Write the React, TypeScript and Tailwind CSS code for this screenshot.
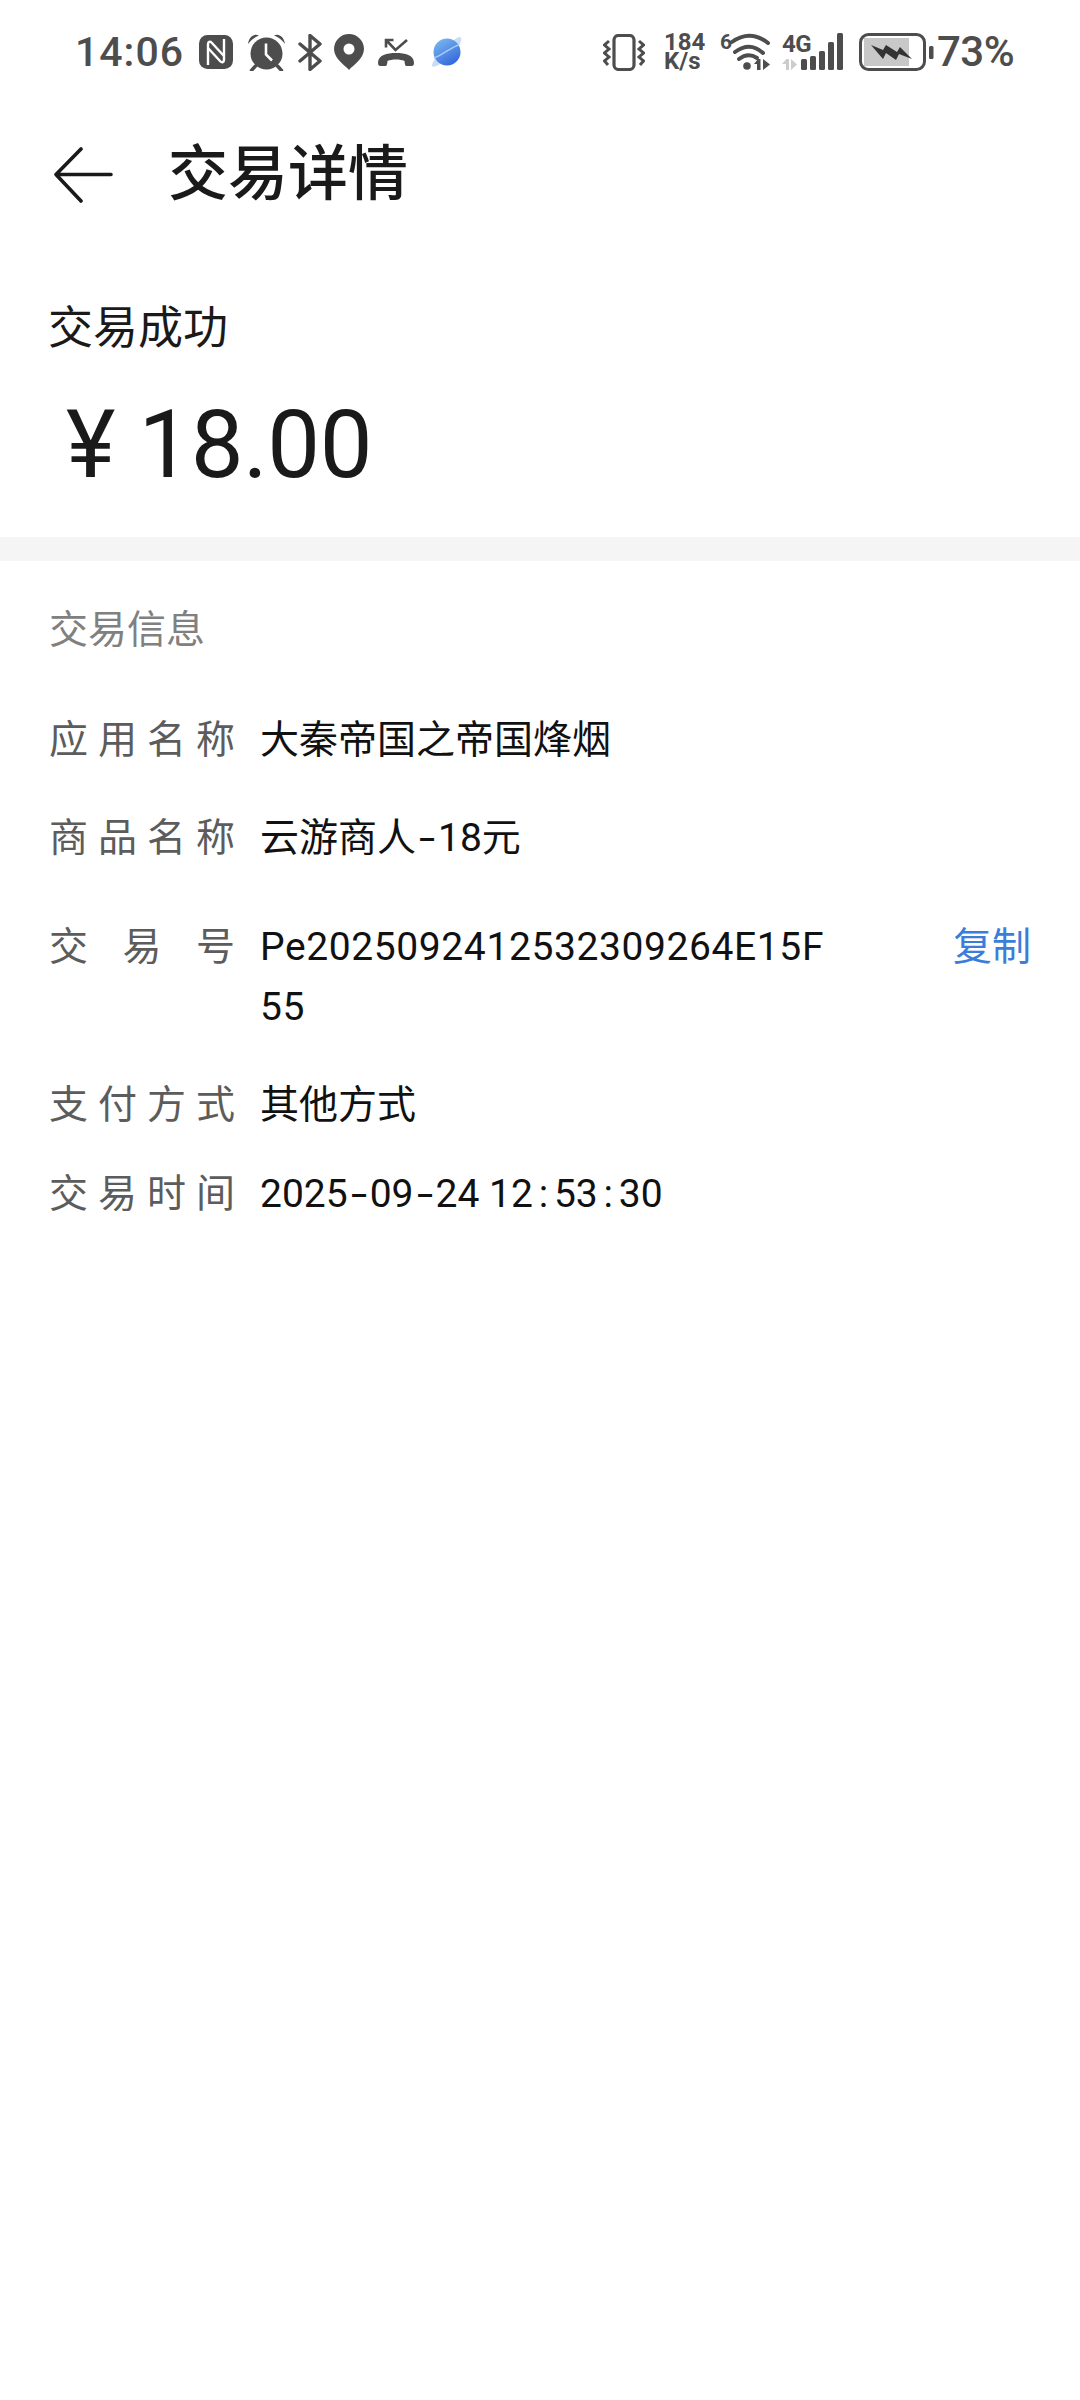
import React from 'react';

const FONT = "font-['Roboto','Noto_Sans_CJK_SC',sans-serif]";

const Nfc = () => (
  <svg width="34" height="34" viewBox="0 0 34 34" className="shrink-0">
    <rect width="34" height="34" rx="8.500" fill="#4d4d4d" />
    <path d="M9 30V9c0-2 2-3 3.500-1.500L25 21M25 4v21c0 2-2 3-3.500 1.500L9 13" fill="none" stroke="#fff" strokeWidth="2.400" strokeLinejoin="round" />
  </svg>
);

const Alarm = () => (
  <svg width="37" height="37" viewBox="0 0 37 37" className="shrink-0">
    <circle cx="18.500" cy="19.500" r="16" fill="#4d4d4d" />
    <path d="M18 9.500v11l6 6" fill="none" stroke="#fff" strokeWidth="2.600" />
    <path d="M0 10C1 3 6-1 11 1.500 6 3.500 3 6 0 10ZM37 10C36 3 31-1 26 1.500 31 3.500 34 6 37 10Z" fill="#4d4d4d" />
    <path d="M7.500 32l-4 4.500M29.500 32l4 4.500" stroke="#4d4d4d" strokeWidth="3.400" strokeLinecap="round" />
  </svg>
);

const Bluetooth = () => (
  <svg width="25" height="37" viewBox="0 0 25 37" className="shrink-0">
    <path d="M2 10l20 17-10 8.500V1.500L22 10 2 27" fill="none" stroke="#4d4d4d" strokeWidth="3.400" strokeLinejoin="round" strokeLinecap="round" />
  </svg>
);

const Pin = () => (
  <svg width="30" height="36" viewBox="0 0 30 36" className="shrink-0">
    <path d="M15 36C12 32 0 25 0 15a15 15 0 0 1 30 0c0 10-12 17-15 21Z" fill="#4d4d4d" />
    <circle cx="15" cy="15" r="5.500" fill="#fff" />
  </svg>
);

const MissedCall = () => (
  <svg width="36" height="29" viewBox="0 0 36 29" className="shrink-0">
    <path d="M8 9.500V2h7.500M8.500 2.500l9 9.500L29 2" fill="none" stroke="#4d4d4d" strokeWidth="2.600" />
    <path d="M0 25c0-8 9-10 18-10s18 2 18 10c0 2-1 3-2 3h-5c-2 0-2-1-2.500-5-4-2-13-2-17 0C9 27 9 28 7 28H2c-1 0-2-1-2-3Z" fill="#4d4d4d" />
  </svg>
);

const Planet = () => (
  <svg width="30" height="30" viewBox="0 0 30 30" className="shrink-0">
    <defs>
      <linearGradient id="planet" x1="0.200" y1="0" x2="0.800" y2="1">
        <stop offset="0" stopColor="#7ab8ee" />
        <stop offset="1" stopColor="#2f62dc" />
      </linearGradient>
    </defs>
    <path d="M0 29c0-3 3-8 8-13S20 3 27 0c3 0 3 3 1 7L8 27c-4 3-7 3-8 2Z" fill="#c9dcf7" />
    <circle cx="15" cy="15" r="13.500" fill="url(#planet)" />
    <path d="M2 21C9 19 21 9 27 8" fill="none" stroke="#a9cdf3" strokeWidth="1.500" />
  </svg>
);

const Vibrate = () => (
  <svg width="42" height="37" viewBox="0 0 42 37" className="shrink-0">
    <rect x="11" y="1.500" width="20" height="34" rx="4.500" fill="none" stroke="#4d4d4d" strokeWidth="3.200" />
    <path d="M6 7L1.500 11 6 15 1.500 19 6 23 1.500 27 5 31M36 7l4.500 4-4.500 4 4.500 4-4.500 4 4.500 4-3.500 4" fill="none" stroke="#4d4d4d" strokeWidth="3" />
  </svg>
);

const Wifi = () => (
  <div className="relative w-[52px] h-[38px] shrink-0">
    <span className="absolute left-0 top-[-3px] text-[21px] leading-[24px] font-bold text-[#4d4d4d]">6</span>
    <svg width="52" height="38" viewBox="0 0 52 38" className="absolute left-0 top-0">
      <path d="M12 9Q30-4 48 10" fill="none" stroke="#4d4d4d" strokeWidth="4" strokeLinecap="round" />
      <path d="M15 19Q30 8 43 20" fill="none" stroke="#4d4d4d" strokeWidth="4" strokeLinecap="round" />
      <path d="M19 26Q28 19 37 25" fill="none" stroke="#4d4d4d" strokeWidth="4" strokeLinecap="round" />
      <circle cx="27" cy="33" r="3.800" fill="#4d4d4d" />
      <path d="M34 31l4-5h2.500v11H37v-6h-3ZM43 26l7 5.500-7 5.500Z" fill="#4d4d4d" />
    </svg>
  </div>
);

const Signal = () => (
  <div className="relative w-[62px] h-[38px] shrink-0">
    <span className="absolute left-0 top-[-3px] text-[24px] leading-[28px] font-bold tracking-[-0.5px] text-[#4d4d4d]">4G</span>
    <svg width="62" height="38" viewBox="0 0 62 38" className="absolute left-0 top-0">
      <path d="M0 31l4.500-5H7v11H4v-6ZM9 26l6 5.500-6 5.500Z" fill="#cccccc" />
      <rect x="19" y="26" width="6" height="11" rx="1.500" fill="#4d4d4d" />
      <rect x="28" y="23" width="6" height="14" rx="1.500" fill="#4d4d4d" />
      <rect x="37" y="18" width="6" height="19" rx="1.500" fill="#4d4d4d" />
      <rect x="46" y="9" width="6" height="28" rx="1.500" fill="#4d4d4d" />
      <rect x="55" y="0" width="6" height="37" rx="1.500" fill="#4d4d4d" />
    </svg>
  </div>
);

const Battery = () => (
  <svg width="75" height="38" viewBox="0 0 75 38" className="shrink-0">
    <rect x="5" y="5" width="45" height="28" fill="#c8c8c8" />
    <rect x="1.500" y="1.500" width="64" height="35" rx="8" fill="none" stroke="#4d4d4d" strokeWidth="3" />
    <rect x="70" y="13" width="4.500" height="13" rx="1.500" fill="#4d4d4d" />
    <path d="M12 12l12 5 3-5 11 7 3-5 12 12-13-5-3 6-10-7-3 6Z" fill="#333333" />
  </svg>
);

const StatusBar = () => (
  <div className="h-[104px] pl-[75px] flex items-center text-[#4d4d4d]">
    <span className="w-[124px] text-[41px] leading-[50px] font-medium tracking-[1px] shrink-0">14:06</span>
    <Nfc />
    <div className="ml-[15px]"><Alarm /></div>
    <div className="ml-[13px]"><Bluetooth /></div>
    <div className="ml-[11px]"><Pin /></div>
    <div className="ml-[14px]"><MissedCall /></div>
    <div className="ml-[18px]"><Planet /></div>
    <div className="ml-[141px]"><Vibrate /></div>
    <div className="ml-[19px] w-[44px] shrink-0 font-bold text-[24px] leading-[19px]">
      <div>184</div>
      <div>K/s</div>
    </div>
    <div className="ml-[12px]"><Wifi /></div>
    <div className="ml-[10px]"><Signal /></div>
    <div className="ml-[15px]"><Battery /></div>
    <span className="ml-[3px] text-[42px] leading-[50px] font-medium tracking-[-0.5px] shrink-0">73%</span>
  </div>
);

// the original font has wide separators, Roboto's are narrow
const Dash = () => <span className="inline-block w-[22px] text-center scale-x-150">-</span>;
const Colon = () => <span className="inline-block w-[21px] text-center">:</span>;

const Label = ({ chars }: { chars: string[] }) => (
  <div className="w-[186px] shrink-0 flex justify-between text-[#5c5c5c]">
    {chars.map((c, i) => (
      <span key={i}>{c}</span>
    ))}
  </div>
);

const Row = ({ label, children, className }: { label: string[]; children: React.ReactNode; className: string }) => (
  <div className={`flex text-[39px] leading-[60px] ${className}`}>
    <Label chars={label} />
    <div className="ml-[25px] text-[#111111]">{children}</div>
  </div>
);

export default function App() {
  return (
    <div className={`${FONT} w-[1080px] min-h-[2400px] bg-white`}>
      <StatusBar />
      <div className="h-[142px] flex items-center pl-[53px]">
        <svg width="62" height="56" viewBox="0 0 62 56" className="shrink-0">
          <path d="M28 2L3 27.500 28 54M3 27.500h55" fill="none" stroke="#1a1a1a" strokeWidth="3.600" strokeLinecap="round" strokeLinejoin="round" />
        </svg>
        <h1 className="ml-[53px] text-[60px] leading-[70px] font-medium text-[#1a1a1a]">交易详情</h1>
      </div>

      <div className="mt-[53px] pl-[48px] text-[45px] leading-[60px] text-[#1a1a1a]">交易成功</div>
      <div className="mt-[31px] pl-[66px] flex items-center h-[110px] text-[#1a1a1a]">
        <span className="text-[94px] leading-[110px]">¥</span>
        <span className="ml-[23px] text-[94px] leading-[110px] tracking-[-0.5px]">18.00</span>
      </div>

      <div className="mt-[37px] h-[24px] bg-[#f5f5f5]" />

      <div className="mt-[44px] pl-[49px] text-[39px] leading-[50px] text-[#808080]">交易信息</div>

      <div className="px-[49px]">
        <Row className="mt-[55px]" label={['应', '用', '名', '称']}>大秦帝国之帝国烽烟</Row>
        <Row className="mt-[38px]" label={['商', '品', '名', '称']}>云游商人<Dash />18元</Row>
        <div className="mt-[49px] flex text-[39px] leading-[60px]">
          <Label chars={['交', '易', '号']} />
          <div className="ml-[25px] w-[580px] break-all tracking-[0.6px] text-[#111111]">Pe2025092412532309264E15F55</div>
          <div className="ml-auto text-[#3b7dd8]">复制</div>
        </div>
        <Row className="mt-[38px]" label={['支', '付', '方', '式']}>其他方式</Row>
        <Row className="mt-[29px]" label={['交', '易', '时', '间']}>
          2025<Dash />09<Dash />24 12<Colon />53<Colon />30
        </Row>
      </div>
    </div>
  );
}
